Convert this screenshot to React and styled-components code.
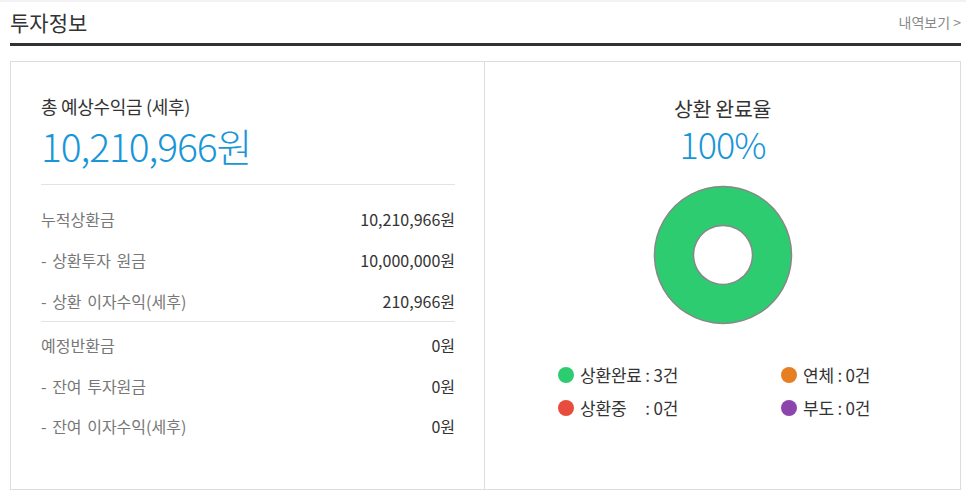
import React from "react";
import styled, { createGlobalStyle } from "styled-components";

const Global = createGlobalStyle`
  html, body { margin: 0; padding: 0; background: #fff; }
  body { font-family: "Noto Sans CJK KR", "Noto Sans", sans-serif; color: #333; }
  * { box-sizing: border-box; }
`;

const Page = styled.div`
  width: 966px;
  border-top: 2px solid #f2f2f2;
  padding: 0 5px 0 10px;
`;

const Header = styled.div`
  display: flex;
  align-items: center;
  justify-content: space-between;
  height: 44px;
  padding-bottom: 2px;
  border-bottom: 3px solid #333;
`;

const Title = styled.h2`
  margin: 0;
  font-size: 21px;
  font-weight: 400;
  color: #333;
  letter-spacing: 0;
`;

const MoreLink = styled.a`
  font-size: 14px;
  color: #888;
  text-decoration: none;
  margin-right: 0;
`;

const Card = styled.div`
  margin-top: 15px;
  height: 429px;
  border: 1px solid #ddd;
  display: grid;
  grid-template-columns: 474px 1fr;
`;

const LeftPane = styled.section`
  border-right: 1px solid #ddd;
  padding: 30px 29px 0 30px;
`;

const SumLabel = styled.div`
  font-size: 18px;
  color: #333;
  line-height: 28px;
  letter-spacing: -0.3px;
`;

const SumValue = styled.div`
  font-size: 39px;
  font-weight: 300;
  color: #1a96d8;
  line-height: 50px;
  letter-spacing: -1.1px;
  padding-bottom: 14px;
  border-bottom: 1px solid #e3e3e3;
`;

const Group = styled.div`
  padding-top: ${(p) => p.$top}px;
  border-bottom: ${(p) => (p.$divider ? "1px solid #e3e3e3" : "none")};
`;

const Row = styled.div`
  display: flex;
  justify-content: space-between;
  align-items: center;
  height: ${(p) => p.$h}px;
  font-size: 16px;
`;

const RowLabel = styled.span`
  color: #777;
  word-spacing: 2px;
`;

const RowValue = styled.span`
  color: #333;
`;

const RightPane = styled.section`
  display: flex;
  flex-direction: column;
  align-items: center;
  padding-top: 31px;
`;

const RateLabel = styled.div`
  font-size: 20.5px;
  color: #333;
  line-height: 30px;
  letter-spacing: -0.3px;
`;

const RateValue = styled.div`
  font-size: 36px;
  font-weight: 300;
  color: #1a96d8;
  line-height: 40px;
  letter-spacing: -1px;
`;

const Chart = styled.svg`
  display: block;
  margin-top: 22px;
`;

const Legend = styled.div`
  align-self: stretch;
  display: grid;
  grid-template-columns: 223px 120px;
  row-gap: 11px;
  margin-top: 39px;
  padding-left: 73px;
`;

const LegendItem = styled.div`
  display: flex;
  align-items: center;
  font-size: 17px;
  line-height: 22px;
  color: #333;
  letter-spacing: -0.2px;
`;

const Dot = styled.span`
  width: 16px;
  height: 16px;
  border-radius: 50%;
  background: ${(p) => p.$color};
  margin-right: 6px;
  flex: none;
`;

const Pad = styled.span`
  display: inline-block;
  width: ${(p) => p.$w}px;
`;

const repaid = [
  ["누적상환금", "10,210,966원"],
  ["- 상환투자 원금", "10,000,000원"],
  ["- 상환 이자수익(세후)", "210,966원"],
];

const remaining = [
  ["예정반환금", "0원"],
  ["- 잔여 투자원금", "0원"],
  ["- 잔여 이자수익(세후)", "0원"],
];

function Donut() {
  const cx = 70;
  const cy = 70;
  return (
    <Chart width="140" height="140" viewBox="0 0 140 140">
      <path
        d={`M ${cx} ${cy - 68.5} A 68.5 68.5 0 1 1 ${cx - 0.01} ${cy - 68.5} Z
            M ${cx} ${cy - 29.5} A 29.5 29.5 0 1 0 ${cx + 0.01} ${cy - 29.5} Z`}
        fill="#2ecc71"
        fillRule="evenodd"
        stroke="#888"
        strokeWidth="1.5"
      />
    </Chart>
  );
}

export default function App() {
  return (
    <>
      <Global />
      <Page>
        <Header>
          <Title>투자정보</Title>
          <MoreLink href="#">내역보기 &gt;</MoreLink>
        </Header>
        <Card>
          <LeftPane>
            <SumLabel>총 예상수익금 (세후)</SumLabel>
            <SumValue>10,210,966원</SumValue>
            <Group $top={13} $divider>
              {repaid.map(([k, v]) => (
                <Row key={k} $h={41}>
                  <RowLabel>{k}</RowLabel>
                  <RowValue>{v}</RowValue>
                </Row>
              ))}
            </Group>
            <Group $top={3}>
              {remaining.map(([k, v]) => (
                <Row key={k} $h={40.5}>
                  <RowLabel>{k}</RowLabel>
                  <RowValue>{v}</RowValue>
                </Row>
              ))}
            </Group>
          </LeftPane>
          <RightPane>
            <RateLabel>상환 완료율</RateLabel>
            <RateValue>100%</RateValue>
            <Donut />
            <Legend>
              <LegendItem>
                <Dot $color="#2ecc71" />상환완료 : 3건
              </LegendItem>
              <LegendItem>
                <Dot $color="#e67e22" />연체 : 0건
              </LegendItem>
              <LegendItem>
                <Dot $color="#e74c3c" />상환중<Pad $w={19} />: 0건
              </LegendItem>
              <LegendItem>
                <Dot $color="#8e44ad" />부도 : 0건
              </LegendItem>
            </Legend>
          </RightPane>
        </Card>
      </Page>
    </>
  );
}
